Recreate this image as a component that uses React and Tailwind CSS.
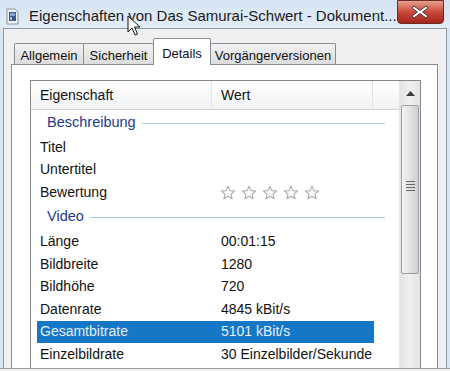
import React from 'react';

const rows = [
  { type: 'group', label: 'Beschreibung' },
  { label: 'Titel', value: '' },
  { label: 'Untertitel', value: '' },
  { label: 'Bewertung', stars: true },
  { type: 'group', label: 'Video' },
  { label: 'Länge', value: '00:01:15' },
  { label: 'Bildbreite', value: '1280' },
  { label: 'Bildhöhe', value: '720' },
  { label: 'Datenrate', value: '4845 kBit/s' },
  { label: 'Gesamtbitrate', value: '5101 kBit/s', selected: true },
  { label: 'Einzelbildrate', value: '30 Einzelbilder/Sekunde' },
];

const tabs = [
  { label: 'Allgemein', w: 'w-[70px]' },
  { label: 'Sicherheit', w: 'w-[71px]' },
  { label: 'Details', w: 'w-[58px]', active: true },
  { label: 'Vorgängerversionen', w: 'w-[126px]' },
];

function Star() {
  return (
    <svg width="16" height="16" viewBox="0 0 16 16">
      <path
        d="M8 1.2 L9.9 5.6 L14.6 6 L11 9.1 L12.1 13.8 L8 11.3 L3.9 13.8 L5 9.1 L1.4 6 L6.1 5.6 Z"
        fill="#fbfbfb"
        stroke="#a9adb3"
        strokeWidth="1.1"
        strokeLinejoin="round"
      />
    </svg>
  );
}

function DocIcon() {
  return (
    <svg width="13" height="17" viewBox="0 0 13 17">
      <path d="M1 1 H9 L12 4 V16 H1 Z" fill="#eef2f6" stroke="#8b95a3" />
      <rect x="3" y="4" width="7" height="9" fill="#3d5a86" />
      <rect x="4" y="5" width="5" height="3" fill="#7fa7d6" />
      <rect x="4" y="9" width="2" height="3" fill="#9bb8dc" />
    </svg>
  );
}

function Cursor() {
  return (
    <svg className="absolute left-[127px] top-[15px]" width="14" height="22" viewBox="0 0 14 22">
      <path
        d="M1 1 L1 17 L5 13 L8 20 L10.5 19 L7.5 12 L13 12 Z"
        fill="#ffffff"
        stroke="#111"
        strokeWidth="1"
        strokeLinejoin="round"
      />
    </svg>
  );
}

function Scrollbar() {
  return (
    <div className="w-[21px] flex flex-col bg-gradient-to-r from-[#e3e3e3] via-[#f0f0f0] to-[#e3e3e3] border-l border-[#e6e6e6]">
      <div className="h-[24px] flex items-center justify-center">
        <svg width="9" height="5" viewBox="0 0 9 5">
          <path d="M0 5 L4.5 0 L9 5 Z" fill="#3c3c3c" />
        </svg>
      </div>
      <div className="h-[169px] mx-[1px] rounded-[2px] border border-[#9a9ea5] bg-gradient-to-r from-[#f4f4f4] via-[#e2e2e2] to-[#cfcfcf] flex items-center justify-center">
        <div className="flex flex-col gap-[2px] -mt-[8px]">
          <div className="w-[9px] h-[1px] bg-[#6a6a6a]" />
          <div className="w-[9px] h-[1px] bg-[#6a6a6a]" />
          <div className="w-[9px] h-[1px] bg-[#6a6a6a]" />
          <div className="w-[9px] h-[1px] bg-[#6a6a6a]" />
        </div>
      </div>
      <div className="flex-1" />
    </div>
  );
}

function Row({ row }) {
  if (row.type === 'group') {
    return (
      <div className={`flex items-center pl-[16px] pr-[14px] ${row.label === 'Video' ? 'h-[27px]' : 'h-[26px]'}`}>
        <span className="text-[14.5px] text-[#1e3a8a]">{row.label}</span>
        <div className="flex-1 h-[1px] bg-[#a9c6e6] ml-[6px]" />
      </div>
    );
  }
  return (
    <div
      className={`flex items-center h-[22.5px] ${row.selected ? 'ml-[6px] w-[337px] bg-[#1578c6] text-[#e6eef6]' : 'text-[#111]'}`}
    >
      <div className={`${row.selected ? 'w-[175px] pl-[3px]' : 'w-[181px] pl-[9px]'} text-[14px]`}>{row.label}</div>
      <div className="pl-[9px] text-[14px] flex items-center">
        {row.stars ? (
          <div className="flex gap-[5px] -ml-[1px] mt-[2px]">
            <Star />
            <Star />
            <Star />
            <Star />
            <Star />
          </div>
        ) : (
          row.value
        )}
      </div>
    </div>
  );
}

export default function App() {
  return (
    <div className="relative w-[450px] h-[371px] overflow-hidden flex flex-col bg-[#d8e5f3] font-['Liberation_Sans',Arial,sans-serif]">
      {/* title bar */}
      <div className="h-[28px] flex items-start bg-gradient-to-b from-[#d6e4f3] to-[#e2ecf7]">
        <div className="pl-[6px] pt-[8px]">
          <DocIcon />
        </div>
        <div className="pl-[10px] pt-[5px] text-[15px] text-[#1b1b1b] whitespace-nowrap">
          Eigenschaften von Das Samurai-Schwert - Dokument...
        </div>
        <div className="flex-1" />
        <div className="w-[57px] h-[24px] mr-[6px] rounded-b-[4px] border border-[#6b2a24] bg-gradient-to-b from-[#e6a08f] via-[#c9463a] to-[#a3261b] flex items-center justify-center">
          <svg width="18" height="14" viewBox="0 0 18 14">
            <path d="M3 1 L9 5.5 L15 1 L17 3 L11.5 7 L17 11 L15 13 L9 8.5 L3 13 L1 11 L6.5 7 L1 3 Z" fill="#ffffff" stroke="#4a3a3a" strokeWidth="1" strokeLinejoin="round" />
          </svg>
        </div>
      </div>

      {/* client area */}
      <div className="flex-1 flex flex-col ml-[3px] mr-[3px] border-l border-t border-r border-[#8d98a6] bg-[#f0f0f0] pl-[7px] pr-[8px] pt-[9px]">
        {/* tabs */}
        <div className="flex items-end pl-[3px] h-[26px] relative z-10">
          {tabs.map((t) =>
            t.active ? (
              <div
                key={t.label}
                className={`${t.w} h-[27px] -mb-[1px] -ml-[1px] bg-white border border-b-0 border-[#898c95] rounded-t-[2px] text-[13px] text-[#111] flex justify-center pt-[5px]`}
              >
                {t.label}
              </div>
            ) : (
              <div
                key={t.label}
                className={`${t.w} h-[21px] -ml-[1px] first:ml-0 bg-gradient-to-b from-[#f2f2f2] to-[#dcdcdc] border border-b-0 border-[#898c95] rounded-t-[2px] text-[13px] text-[#111] flex justify-center pt-[2px]`}
              >
                {t.label}
              </div>
            )
          )}
        </div>

        {/* panel */}
        <div className="flex-1 bg-white border border-[#898c95] border-b-0 pl-[18px] pr-[16px] pt-[15px] flex flex-col">
          <div className="flex-1 flex border border-[#828790] border-b-0">
            <div className="flex-1 flex flex-col overflow-hidden">
              <div className="h-[29px] flex items-center bg-gradient-to-b from-white to-[#f1f2f4] border-b border-[#d5d5d5] text-[14px] text-[#111]">
                <div className="w-[181px] pl-[9px] h-full flex items-center border-r border-[#e3e4e6]">Eigenschaft</div>
                <div className="w-[161px] pl-[9px] h-full flex items-center border-r border-[#e3e4e6]">Wert</div>
              </div>
              {rows.map((r, i) => (
                <Row key={i} row={r} />
              ))}
            </div>
            <Scrollbar />
          </div>
        </div>
      </div>
      <div className="h-[1px] bg-[#9a9ca0]" />
      <div className="h-[2px] bg-[#eeeeee]" />

      <Cursor />
    </div>
  );
}
